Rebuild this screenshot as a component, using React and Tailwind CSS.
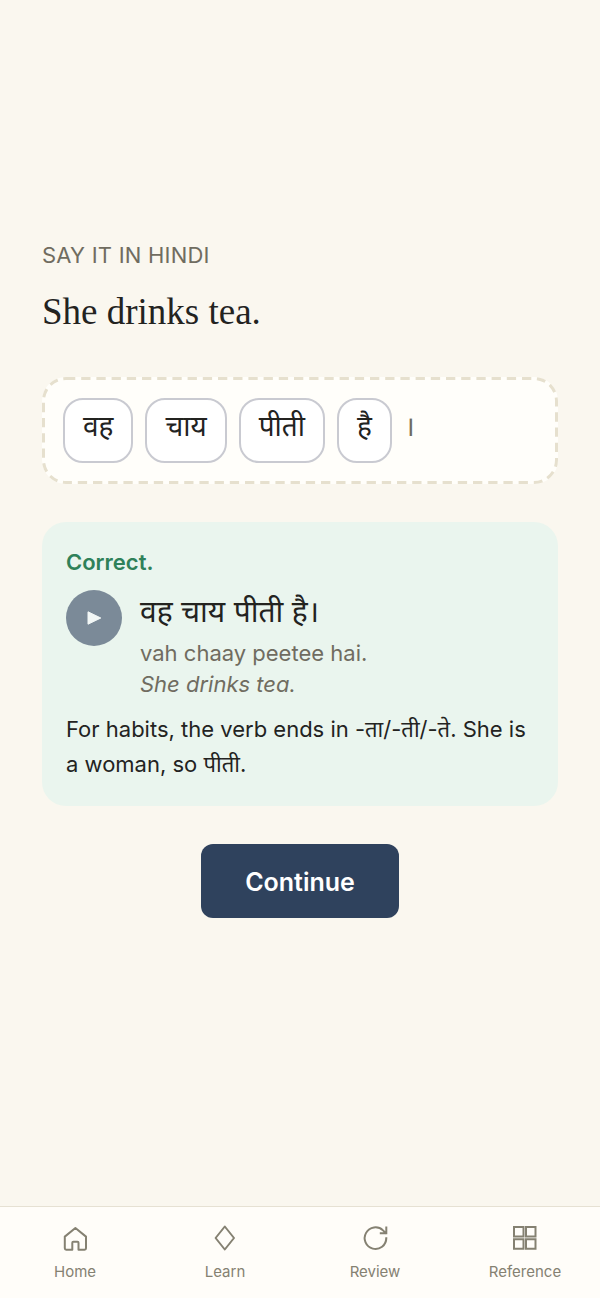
const words = ["वह", "चाय", "पीती", "है"];

const iconProps = {
  width: 32,
  height: 32,
  viewBox: "0 0 32 32",
  fill: "none",
  stroke: "currentColor",
  strokeWidth: 2,
  strokeLinecap: "round",
  strokeLinejoin: "round",
  "aria-hidden": true,
};

const tabs = [
  {
    label: "Home",
    icon: (
      <svg {...iconProps}>
        <path d="M16.400 6 27 14.600V26.300a1.400 1.400 0 0 1-1.400 1.400H19.500v-7a1 1 0 0 0-1-1h-4.200a1 1 0 0 0-1 1v7H7.200a1.400 1.400 0 0 1-1.400-1.400V14.600Z" />
      </svg>
    ),
  },
  {
    label: "Learn",
    icon: (
      <svg {...iconProps}>
        <path d="M15.800 4.500 25 16l-9.200 11.500L6.600 16Z" />
      </svg>
    ),
  },
  {
    label: "Review",
    icon: (
      <svg {...iconProps} strokeLinecap="square" strokeLinejoin="miter">
        <path d="M27.300 16.200a10.800 10.800 0 1 1-3.300-7.800L26.700 11M27.300 5.500V11.200h-5.500" />
      </svg>
    ),
  },
  {
    label: "Reference",
    icon: (
      <svg {...iconProps} strokeLinejoin="miter">
        <path d="M5 5h9.500v9.500H5ZM17 5h9.500v9.500H17ZM5 17.200h9.500v9.500H5ZM17 17.200h9.500v9.500H17Z" />
      </svg>
    ),
  },
];

export default function App() {
  return (
    <div className="flex min-h-screen flex-col bg-[#faf7ef] font-['Inter','Noto_Sans',sans-serif] text-[#23231f]">
      <main className="flex flex-1 flex-col justify-center px-[42px] pb-[50px]">
        <p className="text-[22px] leading-8 text-[#706c60] uppercase tracking-[0.01em]">Say it in Hindi</p>
        <h1 className="mt-[14px] font-['Liberation_Serif',serif] text-[37px] leading-[54px]">She drinks tea.</h1>

        <section
          aria-label="Your answer"
          className="relative mt-[38px] flex flex-wrap items-center gap-3 rounded-3xl bg-[#fffefa] p-[21px]"
        >
          <svg className="pointer-events-none absolute inset-0 size-full rounded-3xl" aria-hidden="true">
            <rect width="100%" height="100%" rx="24" fill="none" stroke="#e6e0ce" strokeWidth="6" strokeDasharray="9.3 5.9" />
          </svg>
          {words.map((word) => (
            <button
              key={word}
              type="button"
              className="h-[65px] rounded-[20px] border-2 border-[#c9cad1] bg-white px-[18px] pb-2 text-[28px] leading-10"
            >
              {word}
            </button>
          ))}
          <span className="pb-2 text-[28px] leading-10 text-[#706c60]">।</span>
        </section>

        <section className="mt-[38px] rounded-3xl bg-[#eaf5ee] p-6">
          <p className="text-[22px] leading-8 font-semibold text-[#2f8159]">Correct.</p>
          <div className="mt-2 flex items-start gap-[18px]">
            <button
              type="button"
              aria-label="Play audio"
              className="mt-1 flex size-14 shrink-0 items-center justify-center rounded-full bg-[#7b8a98] text-[#f2f7f6]"
            >
              <svg width="16" height="16" viewBox="0 0 16 16" fill="currentColor" stroke="currentColor" strokeLinejoin="round" aria-hidden="true">
                <path d="M2 1.800v12.400L14.800 8Z" />
              </svg>
            </button>
            <div>
              <p className="text-[30px] leading-[50px]">वह चाय पीती है।</p>
              <p className="mt-[2px] text-[22px] leading-[31px] text-[#706c60]">vah chaay peetee hai.</p>
              <p className="text-[22px] leading-[31px] text-[#706c60] italic">She drinks tea.</p>
            </div>
          </div>
          <p className="mt-3 text-[22px] leading-[35px]">
            For habits, the verb ends in -ता/-ती/-ते. She is a woman, so पीती.
          </p>
        </section>

        <button
          type="button"
          className="mt-[38px] h-[74px] self-center rounded-xl bg-[#2f425d] px-11 pt-1 text-[25px] font-semibold text-white"
        >
          Continue
        </button>
      </main>

      <nav aria-label="Main" className="grid grid-cols-4 border-t border-[#e6e1d3] bg-[#fffdf9] pt-[15px] pb-[14px]">
        {tabs.map((tab) => (
          <a key={tab.label} href={`#${tab.label.toLowerCase()}`} className="flex flex-col items-center gap-[6px] text-[#858172]">
            {tab.icon}
            <span className="text-[15px] leading-6">{tab.label}</span>
          </a>
        ))}
      </nav>
    </div>
  );
}
